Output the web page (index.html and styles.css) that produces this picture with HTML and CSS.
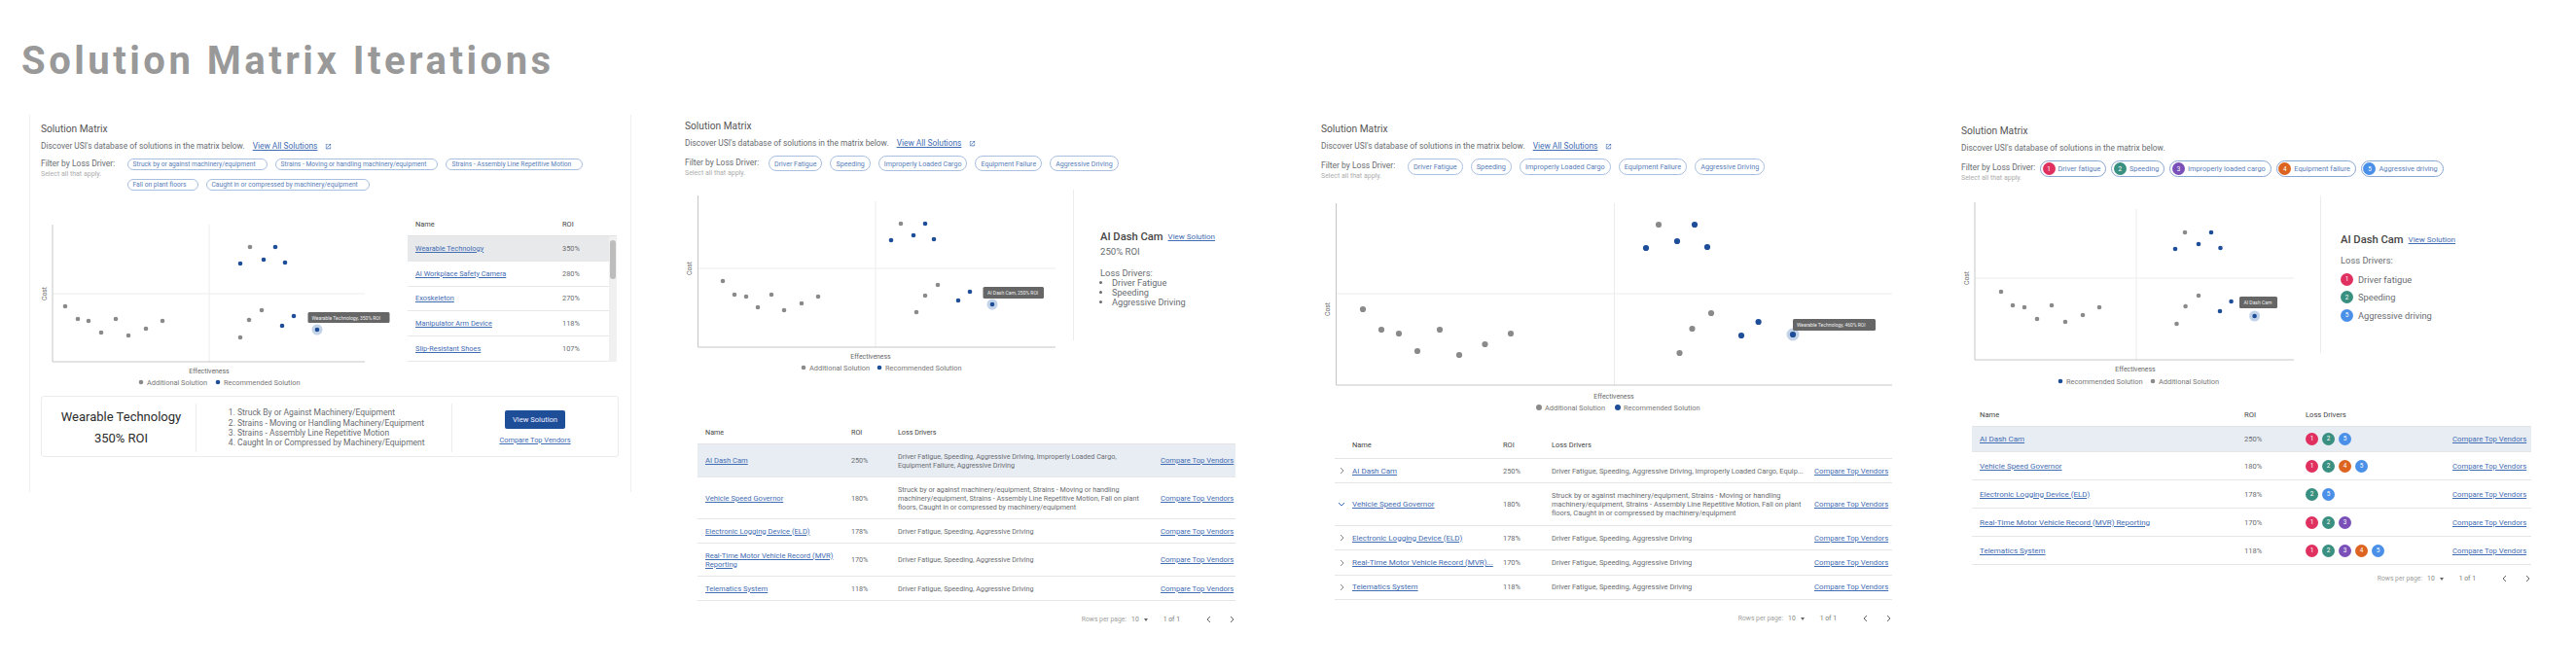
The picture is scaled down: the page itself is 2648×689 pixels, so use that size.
FILE: index.html
```html
<!DOCTYPE html>
<html lang="en">
<head>
    <meta charset="UTF-8">
    <title>Solution Matrix Iterations</title>
    <link rel="stylesheet" href="styles.css">
</head>
<body>
    <h1 class="page-title">Solution Matrix Iterations</h1>

    <div class="panels">

        <!-- iteration 1 -->
        <section class="panel panel-a">
            <h2 class="matrix-title">Solution Matrix</h2>
            <p class="discover">Discover USI's database of solutions in the matrix below. <a href="#" class="all-link">View All Solutions</a>
                <svg class="ext-icon" viewBox="0 0 24 24"><path d="M19 19H5V5h7V3H5a2 2 0 0 0-2 2v14a2 2 0 0 0 2 2h14c1.1 0 2-.9 2-2v-7h-2v7zM14 3v2h3.59l-9.83 9.83 1.41 1.41L19 6.41V10h2V3h-7z"/></svg>
            </p>
            <div class="filter-row">
                <div class="filter-label">
                    <div>Filter by Loss Driver:</div>
                    <div class="filter-hint">Select all that apply.</div>
                </div>
                <div class="chips">
                    <span class="chip">Struck by or against machinery/equipment</span>
                    <span class="chip">Strains - Moving or handling machinery/equipment</span>
                    <span class="chip">Strains - Assembly Line Repetitive Motion</span>
                    <span class="chip">Fall on plant floors</span>
                    <span class="chip">Caught in or compressed by machinery/equipment</span>
                </div>
            </div>

            <div class="matrix-body">
                <svg class="chart" width="366" height="175" viewBox="42 225 366 175">
                    <line class="grid" x1="215" y1="231" x2="215" y2="372"/>
                    <line class="grid" x1="54" y1="302" x2="375" y2="302"/>
                    <polyline class="axis" points="54,231 54,372 375,372"/>
                    <text class="axis-label" transform="translate(48 302) rotate(-90)">Cost</text>
                    <text class="axis-label" x="215" y="383.5">Effectiveness</text>
                    <g class="dots-grey">
                        <circle cx="257" cy="254" r="2.3"/><circle cx="67" cy="315" r="2.3"/><circle cx="80" cy="328" r="2.3"/><circle cx="91" cy="330" r="2.3"/>
                        <circle cx="119" cy="328" r="2.3"/><circle cx="104" cy="342" r="2.3"/><circle cx="132" cy="345" r="2.3"/><circle cx="150" cy="338" r="2.3"/>
                        <circle cx="167" cy="330" r="2.3"/><circle cx="269" cy="319" r="2.3"/><circle cx="256" cy="329" r="2.3"/><circle cx="247" cy="347" r="2.3"/>
                    </g>
                    <g class="dots-blue">
                        <circle cx="283" cy="254" r="2.3"/><circle cx="247" cy="271" r="2.3"/><circle cx="271" cy="267" r="2.3"/><circle cx="293" cy="270" r="2.3"/>
                        <circle cx="302" cy="325" r="2.3"/><circle cx="290" cy="335" r="2.3"/>
                        <circle class="halo" cx="326" cy="339" r="5.5"/><circle cx="326" cy="339" r="2.3"/>
                    </g>
                    <rect class="tip" x="316.5" y="321" width="84" height="11" rx="1.5"/>
                    <text class="tip-text" x="320.5" y="328.5">Wearable Technology, 350% ROI</text>
                    <circle class="dot-grey" cx="145" cy="393" r="2.3"/>
                    <text class="legend" x="151" y="395.5">Additional Solution</text>
                    <circle class="dot-blue" cx="224" cy="393" r="2.3"/>
                    <text class="legend" x="230" y="395.5">Recommended Solution</text>
                </svg>
                <div class="mini-wrap">
                    <div class="mini-head"><span class="mini-name">Name</span><span>ROI</span></div>
                    <div class="mini-scroll">
                        <div class="mini-rows">
                            <div class="mini-row mini-active"><a href="#" class="mini-name">Wearable Technology</a><span>350%</span></div>
                            <div class="mini-row"><a href="#" class="mini-name">AI Workplace Safety Camera</a><span>280%</span></div>
                            <div class="mini-row"><a href="#" class="mini-name">Exoskeleton</a><span>270%</span></div>
                            <div class="mini-row"><a href="#" class="mini-name">Manipulator Arm Device</a><span>118%</span></div>
                            <div class="mini-row"><a href="#" class="mini-name">Slip-Resistant Shoes</a><span>107%</span></div>
                        </div>
                        <div class="scroll-track"><div class="scroll-thumb"></div></div>
                    </div>
                </div>
            </div>

            <div class="summary-card">
                <div class="summary-col summary-name">
                    <div>Wearable Technology</div>
                    <div>350% ROI</div>
                </div>
                <div class="summary-col">
                    <ol class="summary-list">
                        <li>Struck By or Against Machinery/Equipment</li>
                        <li>Strains - Moving or Handling Machinery/Equipment</li>
                        <li>Strains - Assembly Line Repetitive Motion</li>
                        <li>Caught In or Compressed by Machinery/Equipment</li>
                    </ol>
                </div>
                <div class="summary-col summary-actions">
                    <button class="view-btn">View Solution</button>
                    <a href="#">Compare Top Vendors</a>
                </div>
            </div>
        </section>

        <!-- iteration 2 -->
        <section class="panel panel-b">
            <h2 class="matrix-title">Solution Matrix</h2>
            <p class="discover">Discover USI's database of solutions in the matrix below. <a href="#" class="all-link">View All Solutions</a>
                <svg class="ext-icon" viewBox="0 0 24 24"><path d="M19 19H5V5h7V3H5a2 2 0 0 0-2 2v14a2 2 0 0 0 2 2h14c1.1 0 2-.9 2-2v-7h-2v7zM14 3v2h3.59l-9.83 9.83 1.41 1.41L19 6.41V10h2V3h-7z"/></svg>
            </p>
            <div class="filter-row">
                <div class="filter-label">
                    <div>Filter by Loss Driver:</div>
                    <div class="filter-hint">Select all that apply.</div>
                </div>
                <div class="chips">
                    <span class="chip">Driver Fatigue</span>
                    <span class="chip">Speeding</span>
                    <span class="chip">Improperly Loaded Cargo</span>
                    <span class="chip">Equipment Failure</span>
                    <span class="chip">Aggressive Driving</span>
                </div>
            </div>

            <div class="matrix-body">
                <svg class="chart" width="399" height="190" viewBox="704 195 399 190">
                    <line class="grid" x1="900" y1="207" x2="900" y2="357"/>
                    <line class="grid" x1="717.5" y1="276" x2="1085" y2="276"/>
                    <polyline class="axis" points="717.5,201 717.5,357 1085,357"/>
                    <text class="axis-label" transform="translate(711 276) rotate(-90)">Cost</text>
                    <text class="axis-label" x="895" y="368.5">Effectiveness</text>
                    <g class="dots-grey">
                        <circle cx="926" cy="230" r="2.3"/><circle cx="743" cy="289" r="2.3"/><circle cx="755" cy="303" r="2.3"/><circle cx="767" cy="305" r="2.3"/>
                        <circle cx="793" cy="303" r="2.3"/><circle cx="779" cy="316" r="2.3"/><circle cx="806" cy="319" r="2.3"/><circle cx="824" cy="312" r="2.3"/>
                        <circle cx="841" cy="305" r="2.3"/><circle cx="964" cy="293" r="2.3"/><circle cx="951" cy="304" r="2.3"/><circle cx="942" cy="321" r="2.3"/>
                    </g>
                    <g class="dots-blue">
                        <circle cx="951" cy="230" r="2.3"/><circle cx="916" cy="247" r="2.3"/><circle cx="939" cy="242" r="2.3"/><circle cx="960" cy="246" r="2.3"/>
                        <circle cx="997" cy="300" r="2.3"/><circle cx="985" cy="309" r="2.3"/>
                        <circle class="halo" cx="1020" cy="313" r="5.5"/><circle cx="1020" cy="313" r="2.3"/>
                    </g>
                    <rect class="tip" x="1010.5" y="295" width="62.5" height="12" rx="1.5"/>
                    <text class="tip-text" x="1015" y="303">AI Dash Cam, 250% ROI</text>
                    <circle class="dot-grey" cx="826" cy="378" r="2.3"/>
                    <text class="legend" x="832" y="380.5">Additional Solution</text>
                    <circle class="dot-blue" cx="904" cy="378" r="2.3"/>
                    <text class="legend" x="910" y="380.5">Recommended Solution</text>
                </svg>
                <div class="side">
                    <div class="side-head"><span class="side-name">AI Dash Cam</span><a href="#">View Solution</a></div>
                    <div class="side-roi">250% ROI</div>
                    <div class="side-label">Loss Drivers:</div>
                    <ul class="side-list">
                        <li>Driver Fatigue</li>
                        <li>Speeding</li>
                        <li>Aggressive Driving</li>
                    </ul>
                </div>
            </div>

            <table class="vendors">
                <colgroup><col class="c-name"><col class="c-roi"><col class="c-loss"><col class="c-link"></colgroup>
                <thead><tr><th>Name</th><th>ROI</th><th>Loss Drivers</th><th></th></tr></thead>
                <tbody>
                    <tr class="row-active"><td><a href="#">AI Dash Cam</a></td><td>250%</td><td>Driver Fatigue, Speeding, Aggressive Driving, Improperly Loaded Cargo, Equipment Failure, Aggressive Driving</td><td class="one-line"><a href="#">Compare Top Vendors</a></td></tr>
                    <tr><td><a href="#">Vehicle Speed Governor</a></td><td>180%</td><td>Struck by or against machinery/equipment, Strains - Moving or handling machinery/equipment, Strains - Assembly Line Repetitive Motion, Fall on plant floors, Caught in or compressed by machinery/equipment</td><td class="one-line"><a href="#">Compare Top Vendors</a></td></tr>
                    <tr><td><a href="#">Electronic Logging Device (ELD)</a></td><td>178%</td><td>Driver Fatigue, Speeding, Aggressive Driving</td><td class="one-line"><a href="#">Compare Top Vendors</a></td></tr>
                    <tr><td><a href="#">Real-Time Motor Vehicle Record (MVR) Reporting</a></td><td>170%</td><td>Driver Fatigue, Speeding, Aggressive Driving</td><td class="one-line"><a href="#">Compare Top Vendors</a></td></tr>
                    <tr><td><a href="#">Telematics System</a></td><td>118%</td><td>Driver Fatigue, Speeding, Aggressive Driving</td><td class="one-line"><a href="#">Compare Top Vendors</a></td></tr>
                </tbody>
            </table>
            <div class="pager">
                <span>Rows per page:</span><span class="pager-size">10</span><span class="caret"></span><span class="pager-count">1 of 1</span>
                <svg class="pager-prev" width="5" height="8" viewBox="0 0 5 8"><polyline points="4,1 1,4 4,7"/></svg>
                <svg class="pager-next" width="5" height="8" viewBox="0 0 5 8"><polyline points="1,1 4,4 1,7"/></svg>
            </div>
        </section>

        <!-- iteration 3 -->
        <section class="panel panel-c">
            <h2 class="matrix-title">Solution Matrix</h2>
            <p class="discover">Discover USI's database of solutions in the matrix below. <a href="#" class="all-link">View All Solutions</a>
                <svg class="ext-icon" viewBox="0 0 24 24"><path d="M19 19H5V5h7V3H5a2 2 0 0 0-2 2v14a2 2 0 0 0 2 2h14c1.1 0 2-.9 2-2v-7h-2v7zM14 3v2h3.59l-9.83 9.83 1.41 1.41L19 6.41V10h2V3h-7z"/></svg>
            </p>
            <div class="filter-row">
                <div class="filter-label">
                    <div>Filter by Loss Driver:</div>
                    <div class="filter-hint">Select all that apply.</div>
                </div>
                <div class="chips">
                    <span class="chip">Driver Fatigue</span>
                    <span class="chip">Speeding</span>
                    <span class="chip">Improperly Loaded Cargo</span>
                    <span class="chip">Equipment Failure</span>
                    <span class="chip">Aggressive Driving</span>
                </div>
            </div>

            <div class="matrix-body">
                <svg class="chart" width="587" height="222" viewBox="1358 203 587 222">
                    <line class="grid" x1="1659.5" y1="209" x2="1659.5" y2="396"/>
                    <line class="grid" x1="1373.5" y1="302" x2="1945" y2="302"/>
                    <polyline class="axis" points="1373.5,209 1373.5,396 1945,396"/>
                    <text class="axis-label" transform="translate(1367 318) rotate(-90)">Cost</text>
                    <text class="axis-label" x="1659" y="409.5">Effectiveness</text>
                    <g class="dots-grey">
                        <circle cx="1705" cy="231" r="3.1"/><circle cx="1401" cy="318" r="3.1"/><circle cx="1420" cy="339" r="3.1"/><circle cx="1438" cy="343" r="3.1"/>
                        <circle cx="1480" cy="339" r="3.1"/><circle cx="1457" cy="361" r="3.1"/><circle cx="1500" cy="365" r="3.1"/><circle cx="1526.5" cy="354" r="3.1"/>
                        <circle cx="1553" cy="343" r="3.1"/><circle cx="1759" cy="322" r="3.1"/><circle cx="1739.5" cy="338" r="3.1"/><circle cx="1726.5" cy="363" r="3.1"/>
                    </g>
                    <g class="dots-blue">
                        <circle cx="1742" cy="231" r="3.1"/><circle cx="1692" cy="255" r="3.1"/><circle cx="1724" cy="248" r="3.1"/><circle cx="1755" cy="254" r="3.1"/>
                        <circle cx="1807.6" cy="331" r="3.1"/><circle cx="1790" cy="345" r="3.1"/>
                        <circle class="halo" cx="1843" cy="344" r="6.5"/><circle cx="1843" cy="344" r="3.1"/>
                    </g>
                    <rect class="tip" x="1843" y="328" width="85" height="12" rx="1.5"/>
                    <text class="tip-text" x="1847" y="336">Wearable Technology, 460% ROI</text>
                    <circle class="dot-grey" cx="1582" cy="419" r="3"/>
                    <text class="legend" x="1588" y="421.5">Additional Solution</text>
                    <circle class="dot-blue" cx="1663" cy="419" r="3"/>
                    <text class="legend" x="1669" y="421.5">Recommended Solution</text>
                </svg>
            </div>

            <table class="vendors">
                <colgroup><col class="c-chev"><col class="c-name"><col class="c-roi"><col class="c-loss"><col class="c-link"></colgroup>
                <thead><tr><th></th><th>Name</th><th>ROI</th><th>Loss Drivers</th><th></th></tr></thead>
                <tbody>
                    <tr><td><svg class="chev" width="5" height="8" viewBox="0 0 5 8"><polyline points="1,1 4,4 1,7"/></svg></td><td><a href="#">AI Dash Cam</a></td><td>250%</td><td class="one-line">Driver Fatigue, Speeding, Aggressive Driving, Improperly Loaded Cargo, Equip...</td><td class="one-line"><a href="#">Compare Top Vendors</a></td></tr>
                    <tr><td><svg class="chev chev-open" width="8" height="5" viewBox="0 0 8 5"><polyline points="1,1 4,4 7,1"/></svg></td><td><a href="#">Vehicle Speed Governor</a></td><td>180%</td><td>Struck by or against machinery/equipment, Strains - Moving or handling machinery/equipment, Strains - Assembly Line Repetitive Motion, Fall on plant floors, Caught in or compressed by machinery/equipment</td><td class="one-line"><a href="#">Compare Top Vendors</a></td></tr>
                    <tr><td><svg class="chev" width="5" height="8" viewBox="0 0 5 8"><polyline points="1,1 4,4 1,7"/></svg></td><td><a href="#">Electronic Logging Device (ELD)</a></td><td>178%</td><td>Driver Fatigue, Speeding, Aggressive Driving</td><td class="one-line"><a href="#">Compare Top Vendors</a></td></tr>
                    <tr><td><svg class="chev" width="5" height="8" viewBox="0 0 5 8"><polyline points="1,1 4,4 1,7"/></svg></td><td class="one-line"><a href="#">Real-Time Motor Vehicle Record (MVR)...</a></td><td>170%</td><td>Driver Fatigue, Speeding, Aggressive Driving</td><td class="one-line"><a href="#">Compare Top Vendors</a></td></tr>
                    <tr><td><svg class="chev" width="5" height="8" viewBox="0 0 5 8"><polyline points="1,1 4,4 1,7"/></svg></td><td><a href="#">Telematics System</a></td><td>118%</td><td>Driver Fatigue, Speeding, Aggressive Driving</td><td class="one-line"><a href="#">Compare Top Vendors</a></td></tr>
                </tbody>
            </table>
            <div class="pager">
                <span>Rows per page:</span><span class="pager-size">10</span><span class="caret"></span><span class="pager-count">1 of 1</span>
                <svg class="pager-prev" width="5" height="8" viewBox="0 0 5 8"><polyline points="4,1 1,4 4,7"/></svg>
                <svg class="pager-next" width="5" height="8" viewBox="0 0 5 8"><polyline points="1,1 4,4 1,7"/></svg>
            </div>
        </section>

        <!-- iteration 4 -->
        <section class="panel panel-d">
            <h2 class="matrix-title">Solution Matrix</h2>
            <p class="discover">Discover USI's database of solutions in the matrix below.</p>
            <div class="filter-row">
                <div class="filter-label">
                    <div>Filter by Loss Driver:</div>
                    <div class="filter-hint">Select all that apply.</div>
                </div>
                <div class="chips">
                    <span class="chip"><span class="badge b1">1</span>Driver fatigue</span>
                    <span class="chip"><span class="badge b2">2</span>Speeding</span>
                    <span class="chip"><span class="badge b3">3</span>Improperly loaded cargo</span>
                    <span class="chip"><span class="badge b4">4</span>Equipment failure</span>
                    <span class="chip"><span class="badge b5">5</span>Aggressive driving</span>
                </div>
            </div>

            <div class="matrix-body">
                <svg class="chart" width="369" height="196" viewBox="2016 202 369 196">
                    <line class="grid" x1="2196" y1="215" x2="2196" y2="370"/>
                    <line class="grid" x1="2030" y1="286" x2="2358" y2="286"/>
                    <polyline class="axis" points="2030,208 2030,370 2358,370"/>
                    <text class="axis-label" transform="translate(2023.5 286) rotate(-90)">Cost</text>
                    <text class="axis-label" x="2195" y="381.5">Effectiveness</text>
                    <g class="dots-grey">
                        <circle cx="2246" cy="239" r="2.3"/><circle cx="2057" cy="300" r="2.3"/><circle cx="2069" cy="314" r="2.3"/><circle cx="2081" cy="316" r="2.3"/>
                        <circle cx="2109" cy="314" r="2.3"/><circle cx="2094" cy="328" r="2.3"/><circle cx="2123" cy="331" r="2.3"/><circle cx="2141" cy="324" r="2.3"/>
                        <circle cx="2158" cy="316" r="2.3"/><circle cx="2260" cy="304" r="2.3"/><circle cx="2246.6" cy="315" r="2.3"/><circle cx="2237.5" cy="333" r="2.3"/>
                    </g>
                    <g class="dots-blue">
                        <circle cx="2273" cy="239" r="2.3"/><circle cx="2236" cy="256" r="2.3"/><circle cx="2260" cy="251" r="2.3"/><circle cx="2282.5" cy="255" r="2.3"/>
                        <circle cx="2293.6" cy="310" r="2.3"/><circle cx="2282" cy="320" r="2.3"/>
                        <circle class="halo" cx="2317.6" cy="325" r="5.5"/><circle cx="2317.6" cy="325" r="2.3"/>
                    </g>
                    <rect class="tip" x="2302" y="305" width="39" height="12" rx="1.5"/>
                    <text class="tip-text" x="2306.5" y="313">AI Dash Cam</text>
                    <circle class="dot-blue" cx="2118" cy="392" r="2.3"/>
                    <text class="legend" x="2124" y="394.5">Recommended Solution</text>
                    <circle class="dot-grey" cx="2213" cy="392" r="2.3"/>
                    <text class="legend" x="2219" y="394.5">Additional Solution</text>
                </svg>
                <div class="side">
                    <div class="side-head"><span class="side-name">AI Dash Cam</span><a href="#">View Solution</a></div>
                    <div class="side-label">Loss Drivers:</div>
                    <div class="driver"><span class="badge b1">1</span>Driver fatigue</div>
                    <div class="driver"><span class="badge b2">2</span>Speeding</div>
                    <div class="driver"><span class="badge b5">5</span>Aggressive driving</div>
                </div>
            </div>

            <table class="vendors">
                <colgroup><col class="c-name"><col class="c-roi"><col class="c-loss"><col class="c-link"></colgroup>
                <thead><tr><th>Name</th><th>ROI</th><th>Loss Drivers</th><th></th></tr></thead>
                <tbody>
                    <tr class="row-active"><td><a href="#">AI Dash Cam</a></td><td>250%</td><td><div class="badges"><span class="badge b1">1</span><span class="badge b2">2</span><span class="badge b5">5</span></div></td><td class="one-line"><a href="#">Compare Top Vendors</a></td></tr>
                    <tr><td><a href="#">Vehicle Speed Governor</a></td><td>180%</td><td><div class="badges"><span class="badge b1">1</span><span class="badge b2">2</span><span class="badge b4">4</span><span class="badge b5">5</span></div></td><td class="one-line"><a href="#">Compare Top Vendors</a></td></tr>
                    <tr><td><a href="#">Electronic Logging Device (ELD)</a></td><td>178%</td><td><div class="badges"><span class="badge b2">2</span><span class="badge b5">5</span></div></td><td class="one-line"><a href="#">Compare Top Vendors</a></td></tr>
                    <tr><td><a href="#">Real-Time Motor Vehicle Record (MVR) Reporting</a></td><td>170%</td><td><div class="badges"><span class="badge b1">1</span><span class="badge b2">2</span><span class="badge b3">3</span></div></td><td class="one-line"><a href="#">Compare Top Vendors</a></td></tr>
                    <tr><td><a href="#">Telematics System</a></td><td>118%</td><td><div class="badges"><span class="badge b1">1</span><span class="badge b2">2</span><span class="badge b3">3</span><span class="badge b4">4</span><span class="badge b5">5</span></div></td><td class="one-line"><a href="#">Compare Top Vendors</a></td></tr>
                </tbody>
            </table>
            <div class="pager">
                <span>Rows per page:</span><span class="pager-size">10</span><span class="caret"></span><span class="pager-count">1 of 1</span>
                <svg class="pager-prev" width="5" height="8" viewBox="0 0 5 8"><polyline points="4,1 1,4 4,7"/></svg>
                <svg class="pager-next" width="5" height="8" viewBox="0 0 5 8"><polyline points="1,1 4,4 1,7"/></svg>
            </div>
        </section>
    </div>
</body>
</html>
```

FILE: styles.css
```css
body {
    margin: 0;
    background: #fff;
    font-family: Roboto, "Liberation Sans", sans-serif;
    color: #696c70;
}
a {
    color: #3f6cb3;
    text-decoration: underline;
}

.page-title {
    margin: 43px 0 35px 22px;
    font-size: 40px;
    line-height: 40px;
    font-weight: 700;
    letter-spacing: 3.5px;
    color: #999;
}

.panels {
    display: flex;
    align-items: flex-start;
}
.panel {
    box-sizing: border-box;
    flex: none;
}
.panel-a {
    width: 619px;
    height: 388px;
    margin-left: 30px;
    padding: 8px 12px 0 11px;
    border-left: 1px solid #eee;
    border-right: 1px solid #eee;
}
.panel-b {
    width: 566px;
    margin-left: 55px;
    padding-top: 5px;
}
.panel-c {
    width: 587px;
    margin-left: 88px;
    padding-top: 8px;
}
.panel-d {
    width: 586px;
    margin-left: 71px;
    padding-top: 10px;
}

/* heading block */
.matrix-title {
    margin: 0;
    font-size: 10.2px;
    line-height: 14px;
    font-weight: 400;
    color: #555;
}
.discover {
    display: flex;
    align-items: center;
    margin: 4px 0 0;
    font-size: 8.4px;
    line-height: 12px;
    white-space: pre;
}
.all-link {
    margin-left: 6px;
    font-size: 8.4px;
}
.ext-icon {
    width: 7px;
    height: 7px;
    margin-left: 8px;
    fill: #3f6cb3;
}
.filter-row {
    display: flex;
    margin-top: 7px;
}
.filter-label {
    flex: none;
    padding-top: 2px;
    font-size: 8.5px;
    line-height: 11px;
}
.filter-hint {
    font-size: 7px;
    line-height: 10px;
    color: #adadad;
}
.chips {
    display: flex;
    flex-wrap: wrap;
    gap: 8px;
}
.chip {
    box-sizing: border-box;
    display: flex;
    align-items: center;
    height: 16px;
    padding: 0 5px;
    border: 1px solid #a9bfe0;
    border-radius: 9px;
    font-size: 7.1px;
    color: #5a80ba;
    white-space: nowrap;
}
.panel-a .filter-label { width: 88.5px; padding-top: 0; }
.panel-a .chips { gap: 9px 8px; width: 482px; }
.panel-a .chip { height: 12px; padding: 0 11px 0 5px; font-size: 6.7px; }
.panel-b .filter-label { width: 86px; }
.panel-c .filter-label { width: 89px; }
.panel-c .chip { height: 16.5px; font-size: 7.3px; }
.panel-d .filter-label { width: 81px; }
.panel-d .chips { gap: 5px; }
.panel-d .chip { height: 17px; padding: 0 5px 0 1.5px; border-color: #8aa6d2; border-radius: 9px; font-size: 7.4px; }
.panel-d .chip .badge { margin-right: 3px; }

/* badges */
.badge {
    flex: none;
    display: flex;
    align-items: center;
    justify-content: center;
    width: 13px;
    height: 13px;
    border-radius: 50%;
    font-size: 6.4px;
    color: #fff;
}
.b1 { background: #e0305f; }
.b2 { background: #3a9080; }
.b3 { background: #7a4fb8; }
.b4 { background: #dd6420; }
.b5 { background: #4a90e8; }
.badges {
    display: flex;
    gap: 4px;
}

/* chart */
.matrix-body {
    display: flex;
    align-items: flex-start;
}
.panel-a .matrix-body { margin-top: 29px; }
.panel-b .matrix-body { margin-top: 12px; }
.panel-c .matrix-body { margin-top: 17px; }
.panel-d .matrix-body { margin-top: 14px; }
.chart {
    flex: none;
    display: block;
}
.grid {
    stroke: #ececec;
    stroke-width: 1;
}
.axis {
    fill: none;
    stroke: #c6c6c6;
    stroke-width: 1;
}
.axis-label {
    font-size: 6.9px;
    text-anchor: middle;
    fill: #666;
}
.legend {
    font-size: 7.4px;
    fill: #777;
}
.dots-grey circle, .dot-grey { fill: #8a8a8a; }
.dots-blue circle, .dot-blue { fill: #1f4e99; }
.dots-blue .halo { fill: #c3d3e8; }
.tip { fill: #666; }
.tip-text {
    font-size: 5px;
    fill: #eee;
}

/* small table, first iteration */
.mini-wrap {
    width: 215px;
    margin-left: 11px;
    font-size: 7.4px;
}
.mini-head {
    box-sizing: border-box;
    display: flex;
    align-items: center;
    height: 18px;
    padding: 0 0 6px 8px;
    border-bottom: 1px solid #e2e2e2;
    color: #444;
}
.mini-name { width: 151px; }
.mini-scroll { display: flex; }
.mini-rows { flex: 1; }
.mini-row {
    box-sizing: border-box;
    display: flex;
    align-items: center;
    height: 25.8px;
    padding-left: 8px;
    border-bottom: 1px solid #e8e8e8;
}
.mini-active { background: #e8e9eb; }
.scroll-track {
    flex: none;
    width: 8px;
    height: 129px;
    background: #f0f0f0;
}
.scroll-thumb {
    width: 6px;
    height: 40px;
    margin: 4px 0 0 1px;
    border-radius: 3px;
    background: #bdbdbd;
}

/* selected solution card */
.summary-card {
    box-sizing: border-box;
    display: grid;
    grid-template-columns: 158px 263px 1fr;
    height: 63px;
    margin-top: 7px;
    padding: 7px 0 4px;
    border: 1px solid #ececec;
    border-radius: 3px;
}
.summary-col {
    display: flex;
    flex-direction: column;
    justify-content: center;
}
.summary-col + .summary-col { border-left: 1px solid #ececec; }
.summary-name {
    align-items: center;
    padding-left: 5px;
    font-size: 13px;
    line-height: 22px;
    color: #2b2b2b;
}
.summary-list {
    margin: 0;
    padding-left: 42px;
    font-size: 8.5px;
    line-height: 10.3px;
}
.summary-actions {
    align-items: center;
    font-size: 7.4px;
    line-height: 10px;
}
.view-btn {
    width: 62px;
    height: 19px;
    margin-bottom: 7px;
    padding: 0;
    border: none;
    border-radius: 2px;
    background: #1f4e99;
    font-family: inherit;
    font-size: 7.6px;
    color: #eef;
}

/* side details */
.side {
    flex: none;
    box-sizing: border-box;
    border-left: 1px solid #ececec;
}
.panel-b .side {
    height: 155px;
    padding: 42px 0 0 27px;
}
.panel-d .side {
    height: 161px;
    padding: 38px 0 0 20px;
}
.side-head {
    display: flex;
    align-items: center;
    line-height: 14px;
    font-size: 8px;
}
.side-name {
    margin-right: 5px;
    font-size: 11.2px;
    font-weight: 500;
    color: #444;
}
.side-roi {
    margin-top: 2px;
    font-size: 9.6px;
    line-height: 12px;
}
.side-label {
    margin-top: 10px;
    font-size: 9.4px;
    line-height: 11px;
}
.side-list {
    margin: 0;
    padding-left: 12px;
    font-size: 9.2px;
    line-height: 10px;
}
.driver {
    display: flex;
    align-items: center;
    gap: 5px;
    height: 14px;
    margin-bottom: 4.5px;
    font-size: 9.3px;
}
.panel-d .side-label { margin: 8px 0 7px; }

/* vendor tables */
.vendors {
    table-layout: fixed;
    border-collapse: collapse;
}
.vendors th {
    height: 24px;
    padding: 0 8px;
    border-bottom: 1px solid #e4e4e4;
    font-weight: 400;
    text-align: left;
    color: #444;
}
.vendors td {
    padding: 7.5px 8px;
    border-bottom: 1px solid #e6e6e6;
}
.row-active { background: #e8edf4; }
.one-line { white-space: nowrap; }

.panel-b .vendors {
    width: 553px;
    margin: 47px 0 0 13px;
    font-size: 7.2px;
    line-height: 9px;
}
.panel-b .vendors a { font-size: 7.6px; }
.panel-b .c-name { width: 150px; }
.panel-b .c-roi { width: 48px; }
.panel-b .c-loss { width: 270px; }
.panel-b .c-link { width: 85px; }

.panel-c .vendors {
    width: 573px;
    margin: 20px 0 0 14px;
    font-size: 7.45px;
    line-height: 9.3px;
}
.panel-c .vendors a { font-size: 8px; }
.panel-c .vendors td:last-child a { font-size: 7.7px; }
.panel-c .vendors th { height: 26px; padding: 0 4px; }
.panel-c .vendors td { padding: 7.5px 4px; }
.panel-c .vendors td:first-child { padding: 0; }
.panel-c .c-chev { width: 14px; }
.panel-c .c-name { width: 155px; }
.panel-c .c-roi { width: 50px; }
.panel-c .c-loss { width: 270px; }
.panel-c .c-link { width: 84px; }
.chev {
    display: block;
    margin: 0 auto;
}
.chev polyline {
    fill: none;
    stroke: #888;
    stroke-width: 1;
}
.chev-open polyline { stroke: #3f6cb3; }

.panel-d .vendors {
    width: 575px;
    margin: 16px 0 0 11px;
    font-size: 7.6px;
    line-height: 9px;
}
.panel-d .vendors a { font-size: 8px; }
.panel-d .vendors td:last-child a { font-size: 7.7px; }
.panel-d .c-name { width: 272px; }
.panel-d .c-roi { width: 63px; }
.panel-d .c-loss { width: 151px; }
.panel-d .c-link { width: 89px; }
.panel-d .row-active td { padding-top: 6px; padding-bottom: 6px; }

/* pagination */
.pager {
    display: flex;
    align-items: center;
    justify-content: flex-end;
    height: 14px;
    margin-top: 12px;
    font-size: 6.8px;
    color: #a0a0a0;
}
.panel-d .pager { margin-top: 7px; }
.pager-size {
    margin-left: 5px;
    color: #888;
}
.caret {
    width: 0;
    height: 0;
    margin-left: 5px;
    border-left: 2.5px solid transparent;
    border-right: 2.5px solid transparent;
    border-top: 3px solid #666;
}
.pager-count {
    margin-left: 16px;
    color: #777;
}
.pager-prev { margin-left: 27px; }
.pager-next { margin: 0 1px 0 19px; }
.pager polyline {
    fill: none;
    stroke: #666;
    stroke-width: 1;
}
```
